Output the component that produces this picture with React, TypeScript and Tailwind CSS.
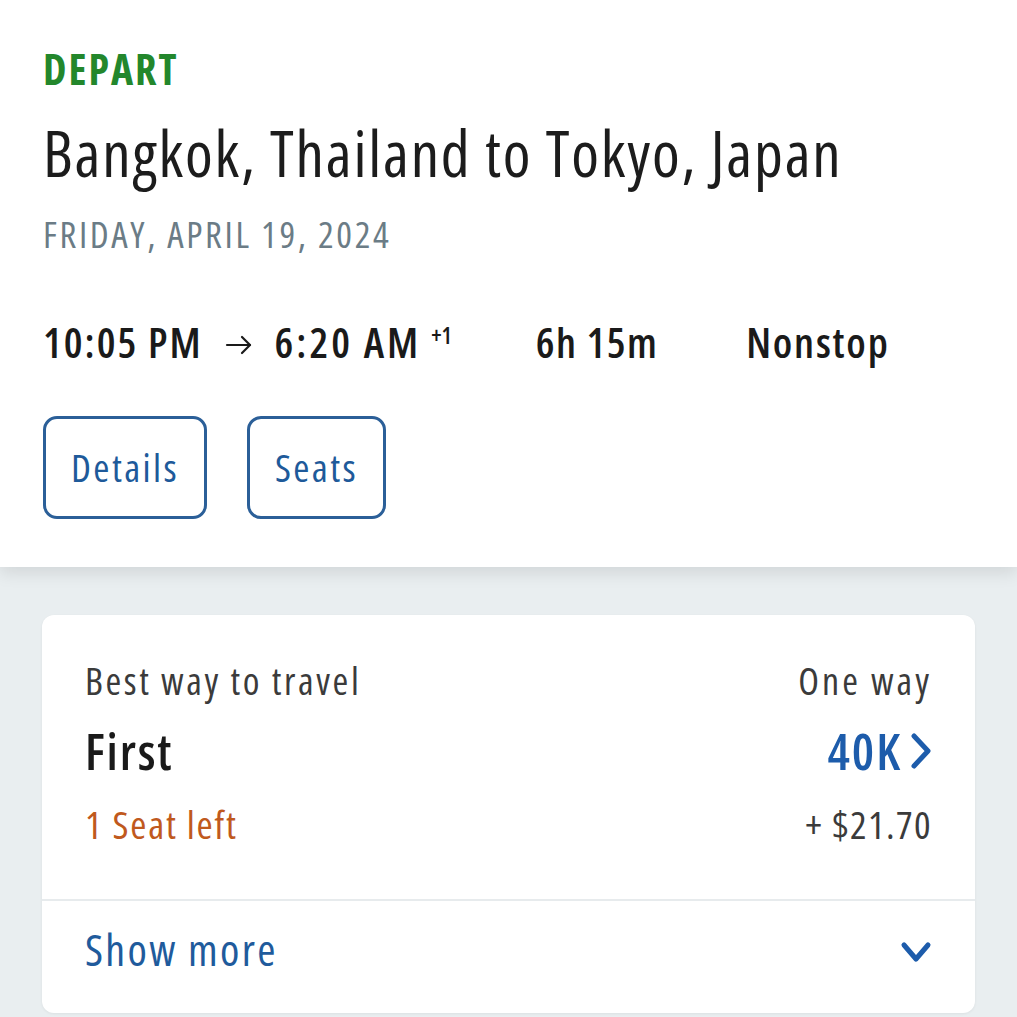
function Arrow() {
  return (
    <svg width="28" height="20" viewBox="0 0 28 20" className="mx-[22px] self-center mt-[6px]" fill="none" stroke="#1a1a1a" strokeWidth="2.2" strokeLinecap="round" strokeLinejoin="round">
      <path d="M2 10h23" />
      <path d="M17 2l8 8-8 8" />
    </svg>
  );
}

function ChevRight() {
  return (
    <svg width="22" height="38" viewBox="0 0 22 38" className="ml-[8px]" fill="none" stroke="#1d5cab" strokeWidth="5" strokeLinecap="round" strokeLinejoin="round">
      <path d="M4 4l14 15L4 34" />
    </svg>
  );
}

function ChevDown() {
  return (
    <svg width="32" height="24" viewBox="0 0 32 24" className="mt-[6px]" fill="none" stroke="#1d5cab" strokeWidth="5" strokeLinecap="round" strokeLinejoin="round">
      <path d="M4 5l12 14L28 5" />
    </svg>
  );
}

export default function App() {
  return (
    <div className="min-h-screen bg-[#e9eef0] font-['Open_Sans',sans-serif] font-stretch-[75%]">
      {/* flight summary */}
      <section className="bg-white px-[43px] pt-[48px] pb-[48px] shadow-[0_6px_16px_rgba(0,0,0,0.10)]">
        <div className="text-[42px] leading-[42px] font-bold tracking-[2px] text-[#23872c]">DEPART</div>
        <h1 className="mt-[31px] text-[63px] leading-[63px] tracking-[1.8px] text-[#1c1c1c]">
          Bangkok, Thailand to Tokyo, Japan
        </h1>
        <div className="mt-[31px] text-[37px] leading-[37px] tracking-[2.6px] text-[#6b7c86]">
          FRIDAY, APRIL 19, 2024
        </div>

        <div className="mt-[66px] flex items-baseline text-[42px] leading-[47px] font-semibold tracking-[2px] text-[#1a1a1a]">
          <span>10:05 PM</span>
          <Arrow />
          <span className="tracking-[3px]">6:20 AM</span>
          <span className="ml-[10px] self-start text-[23px] leading-[34px] tracking-normal">+1</span>
          <span className="ml-[84px] tracking-[1.4px]">6h 15m</span>
          <span className="ml-[88px] tracking-[1.8px]">Nonstop</span>
        </div>

        <div className="mt-[51px] flex gap-[40px]">
          <button className="flex h-[103px] w-[164px] items-center justify-center rounded-[14px] border-[3px] border-[#2b5f98] text-[39px] tracking-[2.4px] text-[#1e5a9a]">
            Details
          </button>
          <button className="flex h-[103px] w-[139px] items-center justify-center rounded-[14px] border-[3px] border-[#2b5f98] text-[39px] tracking-[2.4px] text-[#1e5a9a]">
            Seats
          </button>
        </div>
      </section>

      {/* fare card */}
      <div className="px-[42px] pt-[48px]">
        <div className="rounded-[12px] bg-white shadow-[0_1px_3px_rgba(0,0,0,0.06)]">
          <div className="flex justify-between px-[43px] pt-[46px] pb-[56px]">
            <div className="flex flex-col">
              <span className="text-[38px] leading-[38px] tracking-[2.6px] text-[#3b3b3b]">Best way to travel</span>
              <span className="mt-[27px] text-[50px] leading-[50px] font-semibold tracking-[1.8px] text-[#1a1a1a]">First</span>
              <span className="mt-[28px] text-[39px] leading-[39px] tracking-[1.8px] text-[#c0591d]">1 Seat left</span>
            </div>
            <div className="flex flex-col items-end">
              <span className="text-[38px] leading-[38px] tracking-[3px] text-[#3b3b3b]">One way</span>
              <span className="mt-[27px] flex items-center text-[50px] leading-[50px] font-semibold tracking-[2px] text-[#1d5cab]">
                40K
                <ChevRight />
              </span>
              <span className="mt-[28px] text-[39px] leading-[39px] tracking-[1.4px] text-[#3b3b3b]">+ $21.70</span>
            </div>
          </div>
          <div className="h-[2px] bg-[#e7ebed]" />
          <div className="flex items-center justify-between px-[43px] pt-[26px] pb-[42px]">
            <span className="text-[44px] leading-[44px] tracking-[2.3px] text-[#1f5b9c]">Show more</span>
            <ChevDown />
          </div>
        </div>
      </div>
    </div>
  );
}
